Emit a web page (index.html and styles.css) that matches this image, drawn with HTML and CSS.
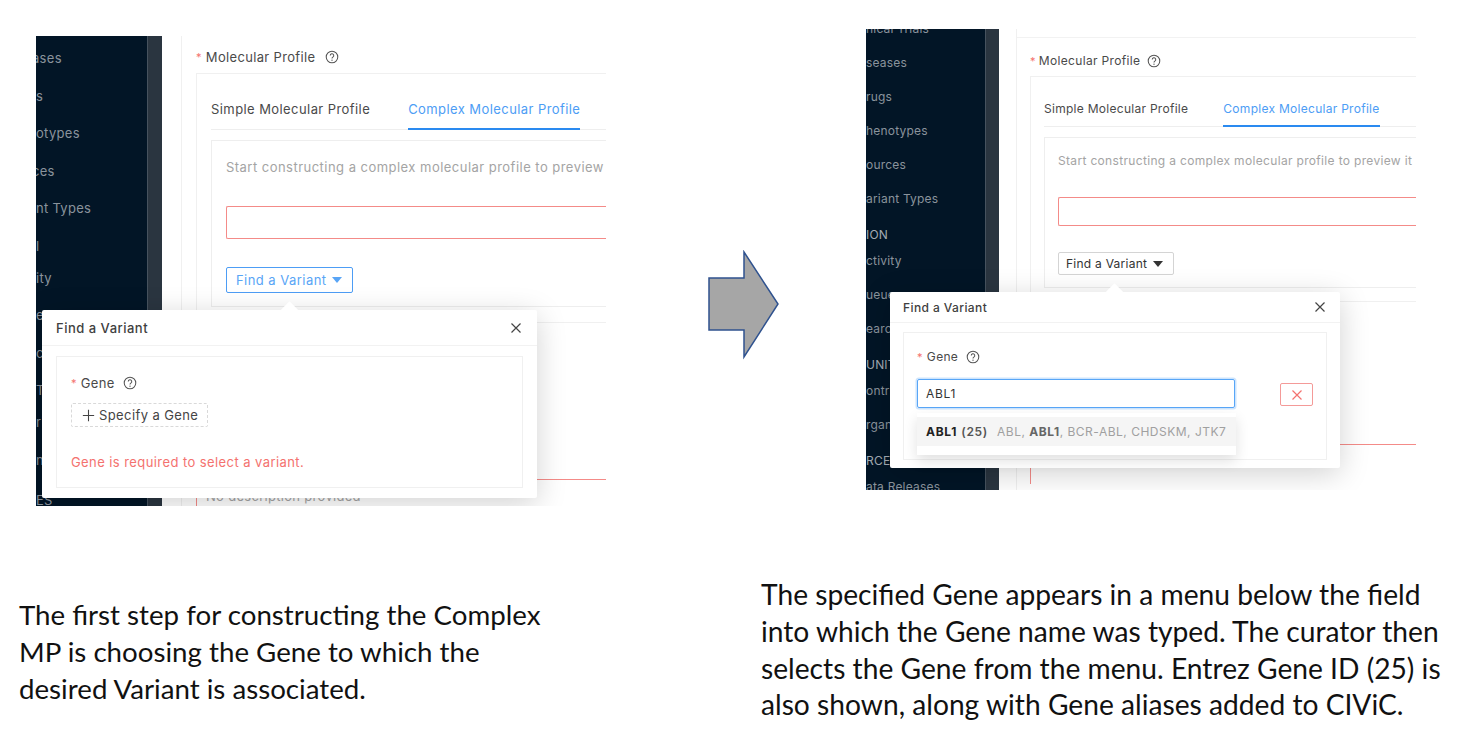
FILE: index.html
```html
<!DOCTYPE html>
<html lang="en">
<head>
  <meta charset="UTF-8" />
  <title>Complex Molecular Profile steps</title>
  <link rel="stylesheet" href="styles.css">
</head>
<body>
  <!-- Left screenshot -->
  <section class="shot shot-left">
    <aside class="side">
      <ul class="side-menu">
        <li class="clip">ases</li>
        <li>s</li>
        <li>otypes</li>
        <li class="clip">ces</li>
        <li>nt Types</li>
        <li class="short">l</li>
        <li>ity</li>
        <li>e</li>
        <li>c</li>
        <li class="short">T</li>
        <li>ri</li>
        <li class="tall">n</li>
        <li>ES</li>
      </ul>
      <div class="side-bar"></div>
    </aside>
    <div class="main">
      <div class="field-label"><span class="req">*</span> Molecular Profile <svg class="help" viewBox="0 0 16 16"><circle cx="8" cy="8" r="6.6"/><path d="M6 6.4a2 2 0 1 1 3 1.7c-.7.4-1 .8-1 1.6"/><circle class="dot" cx="8" cy="11.6" r=".8"/></svg></div>
      <div class="card">
        <div class="tabs">
          <span class="tab">Simple Molecular Profile</span>
          <span class="tab tab-on">Complex Molecular Profile</span>
        </div>
        <div class="builder">
          <p class="hint">Start constructing a complex molecular profile to preview it</p>
          <div class="bad-input"></div>
          <button class="find-btn find-on">Find a Variant <i class="caret"></i></button>
        </div>
      </div>
      <div class="red-box">No description provided</div>
    </div>
    <div class="pop">
      <i class="pop-tip"></i>
      <div class="pop-head">Find a Variant <svg class="close" viewBox="0 0 12 12"><path d="M1.5 1.5l9 9M10.5 1.5l-9 9"/></svg></div>
      <div class="pop-box">
        <div class="field-label"><span class="req">*</span> Gene <svg class="help" viewBox="0 0 16 16"><circle cx="8" cy="8" r="6.6"/><path d="M6 6.4a2 2 0 1 1 3 1.7c-.7.4-1 .8-1 1.6"/><circle class="dot" cx="8" cy="11.6" r=".8"/></svg></div>
        <button class="add-btn"><svg class="plus" viewBox="0 0 12 12"><path d="M6 .8v10.4M.8 6h10.4"/></svg>Specify a Gene</button>
        <p class="err">Gene is required to select a variant.</p>
      </div>
    </div>
  </section>

  <!-- Arrow between the two steps -->
  <svg class="arrow" viewBox="0 0 72 110"><path d="M1 28H36V2L70 54 36 107V80H1Z"/></svg>

  <!-- Right screenshot -->
  <section class="shot shot-right">
    <aside class="side">
      <ul class="side-menu">
        <li>nical Trials</li>
        <li>seases</li>
        <li>rugs</li>
        <li>henotypes</li>
        <li>ources</li>
        <li>ariant Types</li>
        <li class="head">ION</li>
        <li>ctivity</li>
        <li>ueue</li>
        <li>earch</li>
        <li class="head">UNIT</li>
        <li>ontri</li>
        <li>rgan</li>
        <li class="head">RCE</li>
        <li>ata Releases</li>
      </ul>
      <div class="side-bar"></div>
    </aside>
    <div class="main">
      <div class="top-rule"></div>
      <div class="field-label"><span class="req">*</span> Molecular Profile <svg class="help" viewBox="0 0 16 16"><circle cx="8" cy="8" r="6.6"/><path d="M6 6.4a2 2 0 1 1 3 1.7c-.7.4-1 .8-1 1.6"/><circle class="dot" cx="8" cy="11.6" r=".8"/></svg></div>
      <div class="card">
        <div class="tabs">
          <span class="tab">Simple Molecular Profile</span>
          <span class="tab tab-on">Complex Molecular Profile</span>
        </div>
        <div class="builder">
          <p class="hint">Start constructing a complex molecular profile to preview it</p>
          <div class="bad-input"></div>
          <button class="find-btn">Find a Variant <i class="caret"></i></button>
        </div>
      </div>
      <div class="red-box"></div>
    </div>
    <div class="pop">
      <i class="pop-tip"></i>
      <div class="pop-head">Find a Variant <svg class="close" viewBox="0 0 12 12"><path d="M1.5 1.5l9 9M10.5 1.5l-9 9"/></svg></div>
      <div class="pop-box">
        <div class="field-label"><span class="req">*</span> Gene <svg class="help" viewBox="0 0 16 16"><circle cx="8" cy="8" r="6.6"/><path d="M6 6.4a2 2 0 1 1 3 1.7c-.7.4-1 .8-1 1.6"/><circle class="dot" cx="8" cy="11.6" r=".8"/></svg></div>
        <div class="gene-row">
          <div class="gene-input">ABL1</div>
          <button class="del-btn"><svg viewBox="0 0 12 12"><path d="M1.5 1.5l9 9M10.5 1.5l-9 9"/></svg></button>
        </div>
        <div class="gene-menu">
          <div class="gene-opt"><b>ABL1</b> <span class="gene-id">(25)</span> <span class="gene-alias">ABL, <b>ABL1</b>, BCR-ABL, CHDSKM, JTK7</span></div>
        </div>
      </div>
    </div>
  </section>

  <p class="caption caption-left">The first step for constructing the Complex MP is choosing the Gene to which the desired Variant is associated.</p>
  <p class="caption caption-right">The specified Gene appears in a menu below the field into which the Gene name was typed. The curator then selects the Gene from the menu. Entrez Gene ID (25) is also shown, along with Gene aliases added to CIViC.</p>
</body>
</html>
```

FILE: styles.css
```css
/* The page is a slide: two screenshots, an arrow and two captions placed on it */
* {
  margin: 0;
  padding: 0;
  box-sizing: border-box;
}
body {
  position: relative;
  width: 1467px;
  height: 753px;
  overflow: hidden;
  background: #fff;
  font-family: Inter, Arial, sans-serif;
  color: #4a4a4a;
}

.shot {
  position: absolute;
  display: flex;
  overflow: hidden;
  font-size: 13px;
}
.shot-left {
  left: 36px;
  top: 36px;
  width: 570px;
  height: 470px;
}
.shot-right {
  left: 866px;
  top: 29px;
  width: 550px;
  height: 461px;
  font-size: 12px;
}

/* Dark menu */
.side {
  display: flex;
  flex: none;
  width: 126px;
  background: #021526;
}
.shot-right .side {
  width: 133px;
}
.side-menu {
  flex: 1;
  min-width: 0;
  overflow: hidden;
  list-style: none;
  color: #8a939c;
  padding-top: 14px;
  letter-spacing: 0.3px;
}
.side-menu li {
  height: 37.5px;
  white-space: nowrap;
}
.side-menu .clip {
  margin-left: -4px;
}
.side-menu .short {
  height: 32px;
}
.side-menu .tall {
  height: 40px;
}
.side-bar {
  width: 15px;
  background: #2a3540;
  border-left: 1px solid #46525e;
}
.shot-right .side-bar {
  width: 14px;
}
.shot-right .side-menu {
  padding-top: 0;
  margin-top: -8px;
  letter-spacing: 0.2px;
}
.shot-right .side-menu li {
  height: 34px;
}
.shot-right .side-menu .head {
  color: #a3abb3;
  height: 28px;
  padding-top: 2px;
}

/* Form area */
.main {
  flex: 1;
  min-width: 0;
  margin-left: 19px;
  padding-left: 14px;
  border-left: 1px solid #f0f0f0;
}
.shot-right .main {
  margin-left: 17px;
  padding-left: 13px;
}
.top-rule {
  height: 9px;
  margin-left: -13px;
  border-bottom: 1px solid #f2f2f2;
}
.field-label {
  display: flex;
  align-items: center;
  gap: 5px;
  height: 37px;
  padding-top: 5px;
  white-space: nowrap;
  letter-spacing: 0.33px;
}
.shot-right .main > .field-label {
  height: 38px;
  padding-top: 7px;
  gap: 4px;
}
.req {
  color: #f4726f;
  font-size: 11px;
  margin-right: -1px;
}
.help {
  width: 14px;
  height: 14px;
  margin-left: 5px;
  fill: none;
  stroke: #555;
  stroke-width: 1.2;
}
.shot-right .main .help {
  margin-left: 3px;
}
.help .dot {
  fill: #555;
  stroke: none;
}

.card {
  height: 250px;
  padding: 0 0 0 14px;
  border-top: 1px solid #f0f0f0;
  border-left: 1px solid #f0f0f0;
  border-bottom: 1px solid #f0f0f0;
}
.shot-right .card {
  height: 226px;
  padding-left: 13px;
}
.tabs {
  display: flex;
  gap: 38px;
  height: 56px;
  border-bottom: 1px solid #eee;
  white-space: nowrap;
}
.shot-right .tabs {
  height: 50px;
  gap: 35px;
}
.tab {
  display: flex;
  align-items: center;
  height: 56px;
  padding-top: 16px;
  letter-spacing: 0.42px;
  border-bottom: 2px solid transparent;
}
.shot-right .tab {
  height: 50px;
  padding-top: 15px;
  letter-spacing: 0.28px;
}
.tab-on {
  color: #4d9df5;
  border-bottom-color: #2a8af0;
}
.builder {
  height: 167px;
  margin-top: 10px;
  padding: 0 0 0 14px;
  border-top: 1px solid #eee;
  border-left: 1px solid #eee;
  border-bottom: 1px solid #eee;
  white-space: nowrap;
  overflow: hidden;
}
.shot-right .builder {
  height: 151px;
  margin-top: 10px;
  padding-left: 13px;
}
.hint {
  height: 65px;
  padding-top: 18px;
  color: #a4a4a4;
  letter-spacing: 0.47px;
}
.shot-right .hint {
  height: 59px;
  padding-top: 15px;
  letter-spacing: 0.33px;
}
.bad-input {
  width: 100%;
  height: 33px;
  border: 1px solid #f48b88;
  border-right: 0;
  border-radius: 2px 0 0 2px;
}
.shot-right .bad-input {
  height: 29px;
}
.find-btn {
  display: flex;
  align-items: center;
  gap: 6px;
  width: 127px;
  height: 26px;
  margin-top: 28px;
  padding-left: 9px;
  font: inherit;
  letter-spacing: 0.45px;
  color: #333;
  background: #fff;
  border: 1px solid #d4d4d4;
  border-radius: 2px;
}
.shot-right .find-btn {
  width: 116px;
  height: 23px;
  margin-top: 26px;
  padding-left: 7px;
  letter-spacing: 0.25px;
}
.find-on {
  color: #59a5f6;
  border-color: #4d9df5;
}
.caret {
  width: 0;
  height: 0;
  border-left: 5.5px solid transparent;
  border-right: 5.5px solid transparent;
  border-top: 6px solid currentColor;
}
.red-box {
  height: 40px;
  margin-top: 156px;
  padding: 8px 0 0 9px;
  color: #a4a4a4;
  letter-spacing: 0.3px;
  border-top: 1px solid #f48b88;
  border-left: 1px solid #f48b88;
}
.shot-right .red-box {
  margin-top: 142px;
}

/* Popover floating over the form */
.pop {
  position: absolute;
  left: 6px;
  top: 274px;
  width: 495px;
  height: 188px;
  background: #fff;
  border-radius: 2px;
  box-shadow: 0 6px 30px rgba(0, 0, 0, 0.18);
}
.shot-right .pop {
  left: 24px;
  top: 263px;
  width: 450px;
  height: 176px;
}
.pop-tip {
  position: absolute;
  left: 241px;
  top: -6px;
  width: 13px;
  height: 13px;
  background: #fff;
  transform: rotate(45deg);
}
.shot-right .pop-tip {
  left: 218px;
}
.pop-head {
  position: relative;
  display: flex;
  align-items: center;
  justify-content: space-between;
  height: 36px;
  padding: 0 15px 0 14px;
  color: #3f3f3f;
  font-weight: 500;
  letter-spacing: 0.5px;
  border-bottom: 1px solid #f2f2f2;
}
.shot-right .pop-head {
  height: 31px;
  padding: 0 14px 0 13px;
  letter-spacing: 0.4px;
}
.close {
  width: 12px;
  height: 12px;
  fill: none;
  stroke: #444;
  stroke-width: 1.2;
}
.pop-box {
  height: 132px;
  margin: 10px 14px 0;
  padding: 0 14px;
  border: 1px solid #f0f0f0;
}
.shot-right .pop-box {
  position: relative;
  height: 128px;
  margin: 9px 13px 0;
  padding: 0 13px;
}
.pop-box .field-label {
  height: 51px;
  padding-top: 0;
}
.pop-box .help {
  margin-left: 3px;
}
.shot-right .pop-box .field-label {
  height: 46px;
  padding-top: 1px;
}
.add-btn {
  display: flex;
  align-items: center;
  gap: 4px;
  width: 137px;
  height: 24px;
  margin-top: -5px;
  padding-left: 10px;
  font: inherit;
  color: #444;
  letter-spacing: 0.4px;
  background: #fff;
  border: 1px dashed #d9d9d9;
  border-radius: 2px;
}
.plus {
  width: 13px;
  height: 13px;
  fill: none;
  stroke: #444;
  stroke-width: 1;
}
.err {
  margin-top: 27px;
  color: #f4726f;
  letter-spacing: 0.42px;
}
.gene-row {
  display: flex;
  align-items: center;
  gap: 45px;
}
.gene-input {
  display: flex;
  align-items: center;
  width: 319px;
  height: 29px;
  padding-left: 8px;
  color: #333;
  letter-spacing: 0.7px;
  border: 1px solid #58a6f7;
  border-radius: 2px;
  box-shadow: 0 0 0 1.5px rgba(88, 166, 247, 0.3);
}
.del-btn {
  display: flex;
  align-items: center;
  justify-content: center;
  width: 33px;
  height: 23px;
  margin-top: 2px;
  background: #fff;
  border: 1px solid #f49a98;
  border-radius: 2px;
}
.del-btn svg {
  width: 12px;
  height: 12px;
  fill: none;
  stroke: #f4726f;
  stroke-width: 1.2;
}
.gene-menu {
  position: absolute;
  left: 13px;
  top: 80px;
  width: 319px;
  height: 42px;
  padding-top: 4px;
  background: #fff;
  box-shadow: 0 6px 14px rgba(0, 0, 0, 0.12);
}
.gene-opt {
  height: 29px;
  padding-left: 9px;
  line-height: 29px;
  white-space: nowrap;
  background: #f5f5f5;
  letter-spacing: 0.7px;
  color: #222;
}
.gene-id {
  font-weight: 600;
  color: #555;
  margin-right: 5px;
}
.gene-alias {
  color: #a0a0a0;
  letter-spacing: 0.5px;
}
.gene-alias b {
  color: #666;
}

.arrow {
  position: absolute;
  left: 708px;
  top: 250px;
  width: 72px;
  height: 110px;
  fill: #a6a6a6;
  stroke: #2f528f;
  stroke-width: 1.5;
}

/* Captions */
.caption {
  position: absolute;
  font-family: Lato, Arial, sans-serif;
  line-height: 36.8px;
  color: #111;
}
.caption-left {
  left: 19px;
  top: 597px;
  width: 530px;
  font-size: 27.7px;
}
.caption-right {
  left: 761px;
  top: 576px;
  width: 690px;
  font-size: 28.2px;
}
```
